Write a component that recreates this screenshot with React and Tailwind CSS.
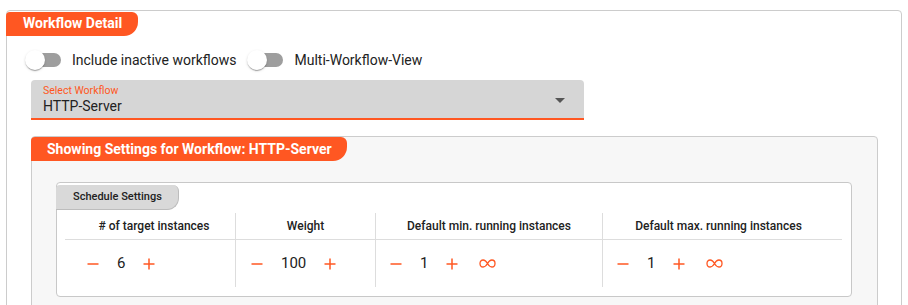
import React from "react"

const ORANGE = "#ff5722"

function Toggle({ label }) {
  return (
    <div className="flex items-center">
      <div className="relative w-[36px] h-[20px]">
        <div className="absolute left-[2px] top-[3px] w-[34px] h-[14px] rounded-full bg-[#9e9e9e]" />
        <div className="absolute left-0 top-0 w-[20px] h-[20px] rounded-full bg-white shadow-[0_2px_1px_-1px_rgba(0,0,0,0.2),0_1px_1px_0_rgba(0,0,0,0.14),0_1px_3px_0_rgba(0,0,0,0.12)]" />
      </div>
      <span className="ml-[11px] text-[14px] text-[#222]">{label}</span>
    </div>
  )
}

function Minus() {
  return (
    <svg width="12" height="12" viewBox="0 0 12 12" className="shrink-0">
      <line x1="0.5" y1="6" x2="11.5" y2="6" stroke={ORANGE} strokeWidth="1.5" />
    </svg>
  )
}

function Plus() {
  return (
    <svg width="12" height="12" viewBox="0 0 12 12" className="shrink-0">
      <line x1="0.5" y1="6" x2="11.5" y2="6" stroke={ORANGE} strokeWidth="1.5" />
      <line x1="6" y1="0.5" x2="6" y2="11.5" stroke={ORANGE} strokeWidth="1.5" />
    </svg>
  )
}

function Infinity() {
  return (
    <svg width="17" height="9" viewBox="0 0 17 9" className="shrink-0">
      <path
        d="M8.5 4.5 C7.1 2 5.7 1 4.1 1 C2.3 1 1 2.6 1 4.5 C1 6.4 2.3 8 4.1 8 C5.7 8 7.1 7 8.5 4.5 C9.9 2 11.3 1 12.9 1 C14.7 1 16 2.6 16 4.5 C16 6.4 14.7 8 12.9 8 C11.3 8 9.9 7 8.5 4.5 Z"
        fill="none"
        stroke={ORANGE}
        strokeWidth="1.3"
      />
    </svg>
  )
}

function Stepper({ value, inf }) {
  return (
    <div className="flex items-center">
      <Minus />
      <span className="mx-[18px] text-[15px] text-[#222] leading-none">{value}</span>
      <Plus />
      {inf && (
        <span className="ml-[21px] flex">
          <Infinity />
        </span>
      )}
    </div>
  )
}

const columns = [
  { title: "# of target instances", w: "w-[170px]", pl: "pl-[22px]", hp: "pl-[8px]", value: 6 },
  { title: "Weight", w: "w-[140px]", pl: "pl-[15px]", hp: "", value: 100 },
  { title: "Default min. running instances", w: "w-[227px]", pl: "pl-[14px]", hp: "", value: 1, inf: true },
  { title: "Default max. running instances", w: "w-[240px]", pl: "pl-[14px]", hp: "pr-[8px]", value: 1, inf: true },
]

export default function App() {
  return (
    <div className="bg-white min-h-[305px] pt-[10px] px-[6px]" style={{ fontFamily: "Roboto, 'Liberation Sans', sans-serif" }}>
      {/* Workflow Detail card */}
      <div className="border border-[#cccccc] rounded-[4px] pb-[40px]">
        <div className="-mt-px -ml-px inline-flex items-center h-[24px] pl-[17px] pr-[16px] bg-[#ff5722] text-white font-bold text-[14px] rounded-tl-[4px] rounded-tr-[6px] rounded-br-[14px]">
          Workflow Detail
        </div>

        {/* toggles */}
        <div className="mt-[14px] ml-[18px] flex items-center gap-[11px]">
          <Toggle label="Include inactive workflows" />
          <Toggle label="Multi-Workflow-View" />
        </div>

        {/* select */}
        <div className="mt-[9px] ml-[24px] w-[553px] h-[40px] bg-[#d6d6d6] rounded-t-[4px] border-b-2 border-[#ff5722] relative pl-[12px]">
          <div className="pt-[5px] text-[10.5px] leading-[12px] text-[#ff5722]">Select Workflow</div>
          <div className="text-[14px] leading-[18px] text-[#222]">HTTP-Server</div>
          <div className="absolute right-[19px] top-[18px] w-0 h-0 border-l-[5px] border-r-[5px] border-t-[5px] border-l-transparent border-r-transparent border-t-[#555]" />
        </div>

        {/* settings card */}
        <div className="mt-[16px] ml-[24px] w-[847px] bg-[#f7f7f7] border border-[#cccccc] rounded-[4px] pb-[30px]">
          <div className="-mt-px -ml-px inline-flex items-center h-[24px] pl-[16px] pr-[15px] bg-[#ff5722] text-white font-bold text-[14px] rounded-tl-[4px] rounded-tr-[6px] rounded-br-[14px]">
            Showing Settings for Workflow: HTTP-Server
          </div>

          <div className="mt-[21px] ml-[24px] w-[796px] bg-white border border-[#c8c8c8] rounded-[4px] pb-[9px]">
            <div className="-mt-px -ml-px inline-flex items-center h-[25px] pl-[17px] pr-[16px] bg-[#d9d9d9] border-r border-b border-[#bdbdbd] text-[11px] font-medium text-[#222] rounded-tl-[4px] rounded-tr-[6px] rounded-br-[12px]">
              Schedule Settings
            </div>

            <div className="mt-[3px] ml-[8px] w-[777px]">
              <div className="flex border-b border-[#dddddd]">
                {columns.map((c, i) => (
                  <div
                    key={c.title}
                    className={`${c.w} ${c.hp} h-[26px] flex items-center justify-center text-[12px] font-medium text-[#222] ${i > 0 ? "border-l border-[#dddddd]" : ""}`}
                  >
                    {c.title}
                  </div>
                ))}
              </div>
              <div className="flex">
                {columns.map((c, i) => (
                  <div
                    key={c.title}
                    className={`${c.w} ${c.pl} h-[47px] flex items-center ${i > 0 ? "border-l border-[#dddddd]" : ""}`}
                  >
                    <Stepper value={c.value} inf={c.inf} />
                  </div>
                ))}
              </div>
            </div>
          </div>
        </div>
      </div>
    </div>
  )
}
